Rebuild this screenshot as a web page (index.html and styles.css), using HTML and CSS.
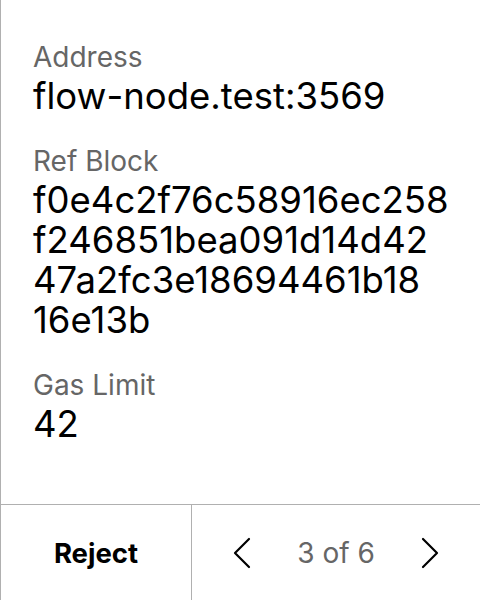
FILE: index.html
```html
<!DOCTYPE html>
<html>
<head>
<meta charset="utf-8">
<link rel="stylesheet" href="styles.css">
</head>
<body>
<div class="screen">
  <div class="content">
    <div class="field">
      <div class="label">Address</div>
      <div class="value">flow-node.test:3569</div>
    </div>
    <div class="field">
      <div class="label">Ref Block</div>
      <div class="value hash"><span class="line">f0e4c2f76c58916ec258</span><span class="line">f246851bea091d14d42</span><span class="line">47a2fc3e18694461b18</span><span class="line">16e13b</span></div>
    </div>
    <div class="field">
      <div class="label">Gas Limit</div>
      <div class="value">42</div>
    </div>
  </div>
  <div class="footer">
    <div class="reject">Reject</div>
    <div class="pager">
      <svg class="chev" width="18" height="32" viewBox="0 0 18 32"><polyline points="16,2 2,16 16,30" fill="none" stroke="#000" stroke-width="2.2" stroke-linecap="round" stroke-linejoin="round"/></svg>
      <span class="count">3 of 6</span>
      <svg class="chev" width="18" height="32" viewBox="0 0 18 32"><polyline points="2,2 16,16 2,30" fill="none" stroke="#000" stroke-width="2.2" stroke-linecap="round" stroke-linejoin="round"/></svg>
    </div>
  </div>
</div>
</body>
</html>
```
FILE: styles.css
```css
html, body {
  margin: 0;
  padding: 0;
  background: #fff;
}
body {
  font-family: Inter, "Noto Sans", sans-serif;
  color: #000;
}
.screen {
  width: 480px;
  height: 600px;
  box-sizing: border-box;
  border-left: 1px solid #b0b0b0;
  display: flex;
  flex-direction: column;
}
.content {
  flex: 1;
  padding: 40px 0 0 32px;
  display: flex;
  flex-direction: column;
  gap: 28px;
}
.label {
  font-size: 28px;
  line-height: 34px;
  color: #666;
}
.value {
  font-size: 36.5px;
  line-height: 40px;
  margin-top: 2px;
}
.hash .line {
  display: block;
}
.footer {
  height: 96px;
  box-sizing: border-box;
  border-top: 1px solid #b0b0b0;
  display: grid;
  grid-template-columns: 191px 1fr;
}
.reject {
  border-right: 1px solid #b0b0b0;
  display: flex;
  align-items: center;
  justify-content: center;
  font-size: 27.5px;
  font-weight: 700;
}
.pager {
  display: flex;
  align-items: center;
  justify-content: space-between;
  padding: 0 41px;
}
.count {
  font-size: 28px;
  color: #666;
}
.chev {
  display: block;
}
```
